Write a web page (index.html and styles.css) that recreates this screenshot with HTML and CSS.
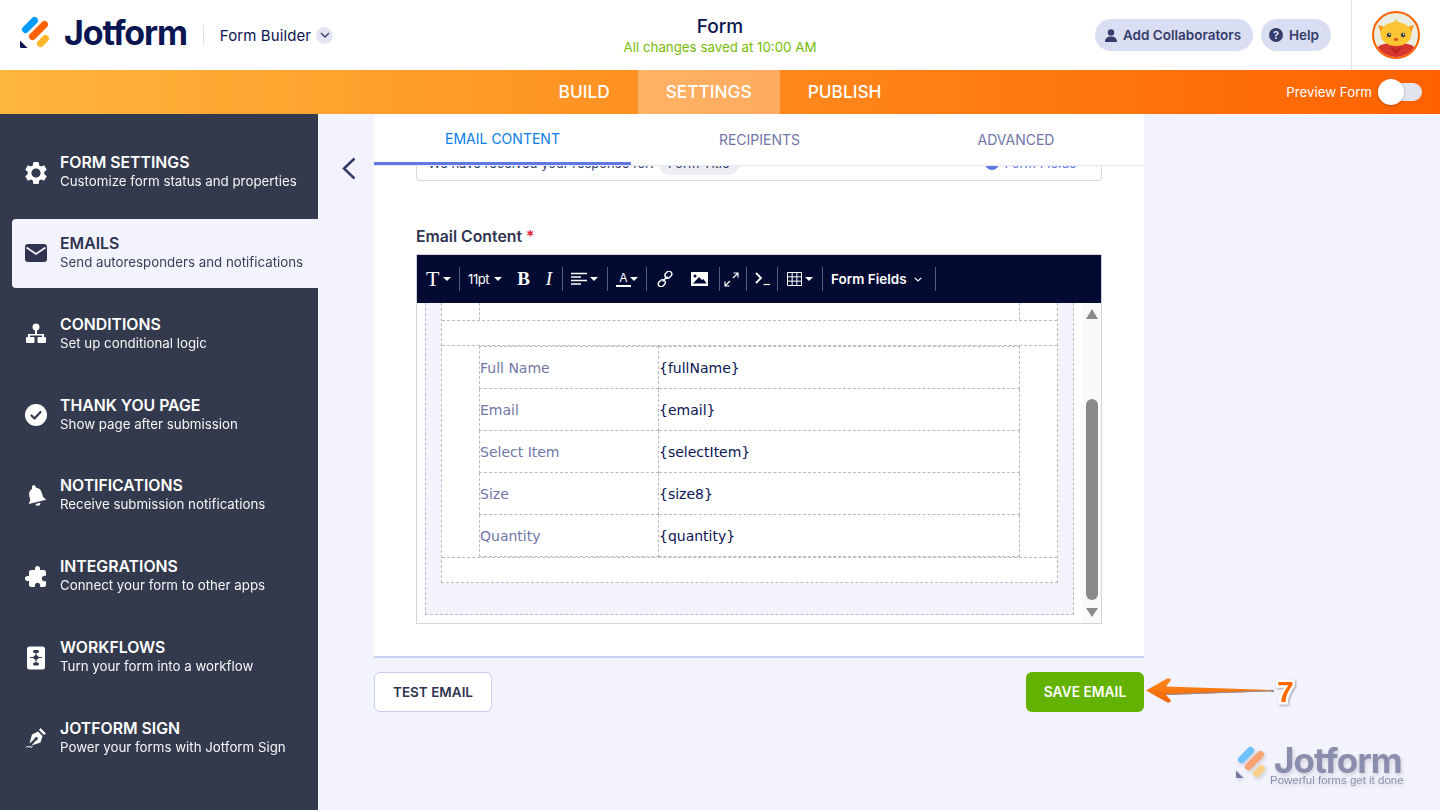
FILE: index.html
```html
<!DOCTYPE html>
<html lang="en">
<head>
<meta charset="utf-8">
<title>Form Builder</title>
<link rel="stylesheet" href="styles.css">
</head>
<body>
<header class="topbar">
  <div class="brand">
    <svg class="logo-mark" width="30" height="34" viewBox="0 0 30 34"><g fill="none" stroke-linecap="round" stroke-width="7"><path d="M5.500 13.500 14.500 4.500" stroke="#0099ff"/><path d="M12.500 20.500 24.500 8.500" stroke="#ff6100"/><path d="M20.500 27.500 25.500 22.500" stroke="#ffb629"/></g><path d="M0 24.500 7.500 32H1.500A1.500 1.500 0 0 1 0 30.500Z" fill="#0a1551"/></svg>
    <span class="wordmark">Jotform</span>
    <span class="brand-sep"></span>
    <span class="brand-sub">Form Builder</span>
    <span class="brand-drop"><svg width="10" height="6" viewBox="0 0 10 6"><path d="M1 1l4 4 4-4" fill="none" stroke="#343c6a" stroke-width="1.300"/></svg></span>
  </div>
  <div class="doc-title">
    <div class="doc-name">Form</div>
    <div class="doc-saved">All changes saved at 10:00 AM</div>
  </div>
  <div class="top-actions">
    <button class="pill pill-add"><svg width="12" height="13" viewBox="0 0 12 13"><circle cx="6" cy="3.500" r="3.200" fill="#343c6a"/><path d="M0 13c0-4 2.500-5.500 6-5.500s6 1.500 6 5.500z" fill="#343c6a"/></svg>Add Collaborators</button>
    <button class="pill pill-help"><span class="q-mark">?</span>Help</button>
    <span class="top-sep"></span>
    <svg class="avatar" width="48" height="48" viewBox="0 0 48 48">
      <circle cx="24" cy="24" r="23" fill="#e9ecdf" stroke="#ff6100" stroke-width="2"/>
      <clipPath id="av"><circle cx="24" cy="24" r="22"/></clipPath>
      <g clip-path="url(#av)">
        <path d="M5 50V38c0-4 8-6 19-6s19 2 19 6v12z" fill="#d8362c"/>
        <path d="M6 14l10 3-5 11z M42 14l-10 3 5 11z" fill="#f29a1f"/>
        <ellipse cx="24" cy="23" rx="15.500" ry="12" fill="#fcc531"/>
        <path d="M24 8l3 5h-6z" fill="#fcc531"/>
        <circle cx="17" cy="24" r="2.200" fill="#3a3a3a"/><circle cx="31" cy="24" r="2.200" fill="#3a3a3a"/>
        <circle cx="17.500" cy="23.200" r="0.800" fill="#fff"/><circle cx="31.500" cy="23.200" r="0.800" fill="#fff"/>
        <ellipse cx="24" cy="28.500" rx="2.400" ry="1.400" fill="#d9541e"/>
        <path d="M18 35l6 4 6-4v2l-6 6-6-6z" fill="#b92820"/>
      </g>
    </svg>
  </div>
</header>

<nav class="navbar">
  <div class="nav-tabs">
    <a class="nav-tab">BUILD</a>
    <a class="nav-tab is-active">SETTINGS</a>
    <a class="nav-tab">PUBLISH</a>
  </div>
  <div class="preview">
    <span>Preview Form</span>
    <span class="switch"><span class="knob"></span></span>
  </div>
</nav>

<div class="workspace">
  <aside class="sidebar">
    <div class="side-item">
      <svg class="side-icon" width="24" height="24" viewBox="1.500 1.500 21 21"><path fill="#fff" d="M19.140 12.940c.04-.3.06-.61.06-.94 0-.32-.02-.64-.07-.94l2.030-1.580c.18-.14.23-.41.12-.61l-1.920-3.320c-.12-.22-.37-.29-.59-.22l-2.390.96c-.5-.38-1.030-.7-1.620-.94L14.400 2.810c-.04-.24-.24-.41-.48-.41h-3.840c-.24 0-.43.17-.47.41L9.250 5.350c-.59.24-1.130.57-1.620.94l-2.390-.96c-.22-.08-.47 0-.59.22L2.740 8.870c-.12.21-.08.47.12.61l2.030 1.580c-.05.3-.09.63-.09.94s.02.64.07.94l-2.030 1.580c-.18.14-.23.41-.12.61l1.920 3.320c.12.22.37.29.59.22l2.390-.96c.5.38 1.030.7 1.620.94l.36 2.540c.05.24.24.41.48.41h3.840c.24 0 .44-.17.47-.41l.36-2.540c.59-.24 1.130-.56 1.620-.94l2.390.96c.22.08.47 0 .59-.22l1.920-3.320c.12-.22.07-.47-.12-.61l-2.010-1.580zM12 16c-2.200 0-4-1.800-4-4s1.800-4 4-4 4 1.800 4 4-1.800 4-4 4z"/></svg>
      <div class="side-text"><div class="side-title">FORM SETTINGS</div><div class="side-sub">Customize form status and properties</div></div>
    </div>
    <div class="side-item is-active">
      <svg class="side-icon" width="24" height="24" viewBox="0 0 24 24"><rect x="1" y="3" width="22" height="18" rx="3" fill="#2f3450"/><path d="M2.500 6.500 12 13l9.500-6.500" fill="none" stroke="#f3f3fe" stroke-width="1.800"/></svg>
      <div class="side-text"><div class="side-title">EMAILS</div><div class="side-sub">Send autoresponders and notifications</div></div>
    </div>
    <div class="side-item">
      <svg class="side-icon" width="24" height="24" viewBox="0 0 24 24"><circle cx="12" cy="5" r="3.500" fill="#fff"/><path d="M11 8h2v4h7v3h-2v-1.500H6V15H4v-3h7z" fill="#fff"/><rect x="2" y="15" width="8.500" height="6" rx="1" fill="#fff"/><rect x="13.500" y="15" width="8.500" height="6" rx="1" fill="#fff"/></svg>
      <div class="side-text"><div class="side-title">CONDITIONS</div><div class="side-sub">Set up conditional logic</div></div>
    </div>
    <div class="side-item">
      <svg class="side-icon" width="24" height="24" viewBox="0 0 24 24"><circle cx="12" cy="12" r="11" fill="#fff"/><path d="M7.500 12.500l3 3 6-6.500" fill="none" stroke="#343a4d" stroke-width="2.200" stroke-linecap="round" stroke-linejoin="round"/></svg>
      <div class="side-text"><div class="side-title">THANK YOU PAGE</div><div class="side-sub">Show page after submission</div></div>
    </div>
    <div class="side-item">
      <svg class="side-icon" width="24" height="24" viewBox="0 0 24 24"><g transform="rotate(-14 12 12)" fill="#fff"><path d="M12 1a2 2 0 0 1 2 2v1c3 1 4.500 3.500 4.500 6.500v4l2.500 3.500H3l2.500-3.500v-4C5.500 7.500 7 5 10 4V3a2 2 0 0 1 2-2z"/><path d="M9.500 19.500h5a2.500 2.500 0 0 1-5 0z"/></g></svg>
      <div class="side-text"><div class="side-title">NOTIFICATIONS</div><div class="side-sub">Receive submission notifications</div></div>
    </div>
    <div class="side-item">
      <svg class="side-icon" width="24" height="24" viewBox="0 0 24 24"><path transform="matrix(-1 0 0 1 24 0)" fill="#fff" d="M20.500 11H19V7c0-1.100-.9-2-2-2h-4V3.500C13 2.120 11.880 1 10.500 1S8 2.120 8 3.500V5H4c-1.100 0-1.990.9-1.990 2v3.800H3.500c1.490 0 2.700 1.210 2.700 2.700s-1.210 2.700-2.700 2.700H2V20c0 1.100.9 2 2 2h3.800v-1.500c0-1.490 1.210-2.700 2.700-2.700 1.490 0 2.700 1.210 2.700 2.700V22H17c1.100 0 2-.9 2-2v-4h1.500c1.380 0 2.500-1.120 2.500-2.500S21.880 11 20.500 11z"/></svg>
      <div class="side-text"><div class="side-title">INTEGRATIONS</div><div class="side-sub">Connect your form to other apps</div></div>
    </div>
    <div class="side-item">
      <svg class="side-icon" width="24" height="24" viewBox="0 0 24 24"><rect x="3" y="0.500" width="18" height="23" rx="2.500" fill="#fff"/><rect x="9" y="4" width="6" height="3" rx="1.500" fill="#343a4d"/><path d="M12 8.500l3.500 3-3.500 3-3.500-3z" fill="#343a4d"/><rect x="9" y="16.500" width="6" height="3" rx="1.500" fill="#343a4d"/><path d="M6 11.500h12M12 7v2M12 14v3" stroke="#343a4d" stroke-width="1"/></svg>
      <div class="side-text"><div class="side-title">WORKFLOWS</div><div class="side-sub">Turn your form into a workflow</div></div>
    </div>
    <div class="side-item">
      <svg class="side-icon" width="24" height="24" viewBox="0 0 24 24"><path d="M16.500 2l5.500 5.500-2 1.500-5-5z" fill="#fff"/><path d="M14 5.500l4.500 4.500-2 6.500-9 3 4.500-5a1.700 1.700 0 1 0-1.500-1.500l-5 4.500 2.500-9z" fill="#fff"/><path d="M2 21.500l1.500-1.500 1 1.500 1.500-1.500 1 1.500 1.500-1" fill="none" stroke="#fff" stroke-width="1"/></svg>
      <div class="side-text"><div class="side-title">JOTFORM SIGN</div><div class="side-sub">Power your forms with Jotform Sign</div></div>
    </div>
  </aside>

  <main class="stage">
    <div class="back-col">
      <svg width="14" height="23" viewBox="0 0 14 23"><path d="M12.500 1.500 2 11.500l10.500 10" fill="none" stroke="#343c6a" stroke-width="2.500"/></svg>
    </div>
    <div class="panel-col">
      <section class="card">
        <div class="tabs">
          <div class="tab is-active">EMAIL CONTENT</div>
          <div class="tab">RECIPIENTS</div>
          <div class="tab">ADVANCED</div>
        </div>
        <div class="card-body">
          <div class="subject">
            <div class="subject-row">
              <span>We have received your response for:</span>
              <span class="subject-pill">Form Title</span>
              <span class="subject-fields"><span class="dot"></span>Form Fields</span>
            </div>
          </div>
          <div class="field-label">Email Content <span class="req">*</span></div>
          <div class="editor">
            <div class="toolbar">
              <div class="tb-group"><span class="tb-item"><span class="g-t">T</span><i class="caret"></i></span></div>
              <div class="tb-group g2"><span class="tb-item"><span class="g-size">11pt</span><i class="caret"></i></span><span class="g-b">B</span><span class="g-i">I</span></div>
              <div class="tb-group g3"><span class="tb-item"><svg width="16" height="14" viewBox="0 0 16 14"><path d="M0 1.500h16M0 5h10M0 8.500h16M0 12h10" stroke="#fff" stroke-width="1.400"/></svg><i class="caret"></i></span></div>
              <div class="tb-group"><span class="tb-item"><span class="g-a">A</span><i class="caret caret-tight"></i></span></div>
              <div class="tb-group g5"><svg width="16" height="16" viewBox="0 0 16 16"><g fill="none" stroke="#fff" stroke-width="1.400"><rect x="7.500" y="1" width="7.500" height="5.500" rx="2.700" transform="rotate(-45 11.200 3.700)"/><rect x="1" y="9.500" width="7.500" height="5.500" rx="2.700" transform="rotate(-45 4.800 12.200)"/><path d="M5.500 10.500 10.500 5.500"/></g></svg><svg width="17" height="14" viewBox="0 0 17 14"><rect width="17" height="14" fill="#fff"/><circle cx="4" cy="4" r="1.500" fill="#030b33"/><path d="M2 11.500 8 5l3 3 1.500-1 3 4.500z" fill="#030b33"/></svg></div>
              <div class="tb-group g6"><svg width="15" height="15" viewBox="0 0 15 15"><path d="M9 6l5-5M9.500 1H14v4.500M6 9l-5 5M1 9.500V14h4.500" fill="none" stroke="#fff" stroke-width="1.200"/></svg></div>
              <div class="tb-group g7"><svg width="15" height="14" viewBox="0 0 15 14"><path d="M1 1l5 5-5 5" fill="none" stroke="#fff" stroke-width="1.800"/><path d="M8.500 12.500H15" stroke="#fff" stroke-width="1.200"/></svg></div>
              <div class="tb-group g8"><span class="tb-item"><svg width="15" height="14" viewBox="0 0 15 14"><path d="M.5.500h14v13H.5zM5.170.5v13M9.830.5v13M.5 4.830h14M.5 9.170h14" fill="none" stroke="#fff" stroke-width="1"/></svg><i class="caret"></i></span></div>
              <div class="tb-group g9"><span class="tb-item gap-8"><span class="g-fields">Form Fields</span><svg width="8" height="5" viewBox="0 0 8 5"><path d="M.8.800 4 4 7.200.8" fill="none" stroke="#fff" stroke-width="1.200"/></svg></span></div>
            </div>
            <div class="editor-body">
              <div class="doc">
                <div class="doc-inner">
                  <div class="stub"></div>
                  <div class="spacer"></div>
                  <table class="fields">
                    <tr><td class="lbl">Full Name</td><td>{fullName}</td></tr>
                    <tr><td class="lbl">Email</td><td>{email}</td></tr>
                    <tr><td class="lbl">Select Item</td><td>{selectItem}</td></tr>
                    <tr><td class="lbl">Size</td><td>{size8}</td></tr>
                    <tr><td class="lbl">Quantity</td><td>{quantity}</td></tr>
                  </table>
                  <div class="spacer spacer-end"></div>
                </div>
              </div>
              <div class="scrollbar">
                <i class="sb-up"></i>
                <i class="sb-thumb"></i>
                <i class="sb-down"></i>
              </div>
            </div>
          </div>
        </div>
      </section>
      <div class="actions">
        <button class="btn btn-test">TEST EMAIL</button>
        <button class="btn btn-save">SAVE EMAIL</button>
      </div>
    </div>

    <svg class="callout-arrow" width="130" height="30" viewBox="0 0 130 30">
      <defs><linearGradient id="ar" x1="0" y1="0" x2="0" y2="1"><stop offset="0" stop-color="#ff8a1e"/><stop offset="1" stop-color="#f06400"/></linearGradient></defs>
      <path d="M0 14.500 21 2.500q3-1 4 1.500l-5 6.500L128 14v1.200L20 19l5 5.500q-1 3-4 1.800z" fill="url(#ar)"/>
      <path d="M20 19l108-3.800v-1L20 18z" fill="#8a8fa8"/>
    </svg>
    <div class="callout-num">7</div>

    <div class="watermark">
      <svg width="32" height="34" viewBox="0 0 30 34"><g fill="none" stroke-linecap="round" stroke-width="7"><path d="M5.500 13.500 14.500 4.500" stroke="#0099ff"/><path d="M12.500 20.500 24.500 8.500" stroke="#ff6100"/><path d="M20.500 27.500 25.500 22.500" stroke="#ffb629"/></g><path d="M0 24.500 7.500 32H1.500A1.500 1.500 0 0 1 0 30.500Z" fill="#0a1551"/></svg>
      <div class="wm-text">
        <div class="wm-name">Jotform</div>
        <div class="wm-tag">Powerful forms get it done</div>
      </div>
    </div>
  </main>
</div>
</body>
</html>
```

FILE: styles.css
```css
* { box-sizing: border-box; }
html, body { margin: 0; height: 810px; overflow: hidden; }
body { font-family: Inter, "Noto Sans", sans-serif; color: #0a1551; background: #f3f3fe; }
button { font-family: inherit; border: 0; cursor: pointer; }

/* top bar */
.topbar { height: 70px; background: #fff; display: grid; grid-template-columns: 1fr auto 1fr; align-items: center; }
.brand { display: flex; align-items: center; padding-left: 20px; }
.logo-mark { flex: none; margin-top: -5px; }
.wordmark { font-size: 34px; font-weight: 700; letter-spacing: -1.150px; color: #0a1551; margin-left: 14px; line-height: 40px; margin-top: -4px; }
.brand-sep { width: 1px; height: 20px; background: #dfe0ea; margin: 0 16px; }
.brand-sub { font-size: 15px; color: #0a1551; letter-spacing: .1px; }
.brand-drop { width: 17px; height: 17px; border-radius: 50%; background: #e3e5f5; margin-left: 5px; display: flex; align-items: center; justify-content: center; }
.doc-title { text-align: center; }
.doc-name { font-size: 19px; font-weight: 500; line-height: 24px; color: #0a1551; }
.doc-saved { font-size: 13.300px; line-height: 16px; color: #78bb07; }
.top-actions { display: flex; align-items: center; justify-content: flex-end; height: 70px; padding-right: 20px; }
.pill { height: 32px; border-radius: 16px; background: #dadef3; color: #343c6a; font-size: 13.500px; font-weight: 600; padding: 0 0 0 10px; margin-left: 8px; display: flex; align-items: center; gap: 6px; white-space: nowrap; }
.pill-add { width: 158px; }
.pill-help { width: 70px; padding-left: 8px; }
.q-mark { width: 14px; height: 14px; border-radius: 50%; background: #343c6a; color: #dadef3; font-size: 11px; font-weight: 700; line-height: 14px; text-align: center; }
.top-sep { width: 1px; height: 70px; background: #dfe0e6; margin: 0 20px; }
.avatar { flex: none; }

/* orange nav */
.navbar { height: 44px; position: relative; display: flex; justify-content: center; background: linear-gradient(90deg, #ffb63c 0%, #ff6100 100%); }
.nav-tabs { display: flex; }
.nav-tab { height: 44px; padding: 0 28px; color: #fff; font-size: 17.300px; font-weight: 500; line-height: 44px; }
.nav-tab.is-active { background: rgba(255, 255, 255, .3); }
.preview { position: absolute; right: 18px; top: 0; height: 44px; display: flex; align-items: center; gap: 6px; color: #fff; font-size: 13.300px; }
.switch { width: 44px; height: 18px; border-radius: 9px; background: #e1e3ec; position: relative; display: block; }
.knob { position: absolute; left: 0; top: -4px; width: 26px; height: 26px; border-radius: 50%; background: #fff; box-shadow: 0 1px 3px rgba(0,0,0,.25); }

/* layout */
.workspace { display: flex; height: 696px; }
.sidebar { width: 318px; flex: none; background: #343a4d; padding: 24px 0 0 12px; display: flex; flex-direction: column; gap: 11.850px; }
.side-item { height: 69px; display: flex; align-items: center; gap: 12px; padding-left: 12px; color: #fff; border-radius: 4px 0 0 4px; }
.side-item.is-active { background: #f3f3fe; color: #2f3450; }
.side-icon { flex: none; }
.side-text { padding-bottom: 2px; }
.side-title { font-size: 15.800px; font-weight: 600; line-height: 20px; white-space: nowrap; }
.side-sub { font-size: 13.300px; line-height: 17px; opacity: .95; white-space: nowrap; }

.stage { flex: 1; position: relative; display: flex; overflow: hidden; }
.back-col { width: 56px; flex: none; padding: 43px 0 0 24px; }
.panel-col { width: 770px; flex: none; }
.card { background: #fff; border-bottom: 2px solid #c8ceed; }
.tabs { display: grid; grid-template-columns: 257px 257px 256px; height: 52px; border-bottom: 1px solid #e8e9f5; background: #fff; position: relative; }
.tab { text-align: center; font-size: 14px; line-height: 51px; color: #6f76a7; height: 51px; }
.tab.is-active { color: #0a7ee8; line-height: 50px; border-bottom: 3px solid #5f78e6; }
.card-body { padding: 0 42px 32px; }

.subject { height: 15px; overflow: hidden; border: 1px solid #d8dae9; border-top: 0; border-radius: 0 0 4px 4px; }
.subject-row { display: flex; align-items: center; height: 30px; margin-top: -18px; padding: 0 11px; font-size: 13px; color: #343c6a; }
.subject-pill { margin-left: 4px; width: 82px; height: 24px; border-radius: 12px; background: #eceef4; text-align: center; line-height: 24px; }
.subject-fields { margin-left: auto; display: flex; align-items: center; gap: 6px; color: #5f78e6; padding-right: 14px; }
.dot { width: 14px; height: 14px; border-radius: 50%; background: #5f78e6; }
.field-label { margin-top: 46px; font-size: 15.800px; font-weight: 600; line-height: 20px; color: #2f3450; margin-bottom: 7px; }
.req { color: #e3243b; }

.editor { border: 1px solid #d3d3de; height: 370px; }
.toolbar { height: 48px; background: #030b33; display: flex; align-items: center; color: #fff; }
.tb-group { height: 24px; padding: 0 8px; border-right: 1px solid #545a78; display: flex; align-items: center; flex: none; }
.tb-item { display: flex; align-items: center; gap: 3px; }
.gap-8 { gap: 8px; }
.g2 { gap: 15px; padding-right: 9px; }
.g3 { padding-right: 9px; }
.g5 { gap: 18px; padding: 0 11px 0 10px; }
.g6 { padding: 0 7px 0 4px; }
.g7 { padding: 0 7px 0 8px; }
.g8 { padding: 0 9px 0 9px; }
.g9 { padding: 0 13px 0 8px; }
.tb-group:first-child { padding-left: 9px; }
.caret { width: 0; height: 0; border-left: 4px solid transparent; border-right: 4px solid transparent; border-top: 4px solid #fff; }
.caret-tight { margin-left: -4px; }
.g-t { font: 22px/24px "Liberation Serif", serif; width: 14px; }
.g-size { font-size: 13px; letter-spacing: -.4px; width: 23px; }
.g-b { font: 700 19px/24px "Liberation Serif", serif; width: 13px; text-align: center; }
.g-i { font: italic 19px/24px "Liberation Serif", serif; width: 8px; text-align: center; }
.g-a { font-size: 12px; line-height: 14px; width: 15px; text-align: center; border-bottom: 2px solid #fff; }
.g-fields { font-size: 13.500px; font-weight: 600; white-space: nowrap; width: 75px; }

.editor-body { height: 320px; display: flex; justify-content: space-between; overflow: hidden; }
.doc { width: 649px; margin-left: 8px; height: 312px; background: #f3f3fe; border: 1px dashed #bbb; border-top: 0; padding: 0 15px 31px; }
.doc-inner { background: #fff; border: 1px dashed #bbb; border-top: 0; height: 280px; }
.stub { height: 17px; margin: 0 37px; border: 1px dashed #bbb; border-top: 0; border-bottom: 0; }
.spacer { height: 26px; border-top: 1px dashed #bbb; border-bottom: 1px dashed #bbb; }
.spacer-end { border-bottom: 0; height: 25px; }
.fields { width: 541px; margin: 0 37px; border-collapse: collapse; table-layout: fixed; font: 14px/20px "DejaVu Sans", Verdana, sans-serif; color: #0a1551; }
.fields td { height: 42px; padding: 0; border: 1px dashed #bbb; white-space: nowrap; }
.fields td.lbl { width: 179px; color: #6f76a7; }
.scrollbar { width: 19px; background: #fafafa; display: flex; flex-direction: column; align-items: center; padding-top: 6px; }
.sb-up { width: 0; height: 0; border-left: 6px solid transparent; border-right: 6px solid transparent; border-bottom: 10px solid #8a8a8a; }
.sb-thumb { width: 12px; height: 201px; border-radius: 6px; background: #8a8a8a; margin-top: 80px; }
.sb-down { width: 0; height: 0; border-left: 6px solid transparent; border-right: 6px solid transparent; border-top: 9px solid #8a8a8a; margin-top: 8px; }

.actions { display: flex; justify-content: space-between; margin-top: 14px; }
.btn { width: 118px; height: 40px; border-radius: 6px; font-size: 13.800px; font-weight: 600; padding: 0; }
.btn-test { background: #fff; border: 1px solid #c8ceed; color: #2f3450; font-size: 13.500px; }
.btn-save { background: #64b200; color: #fff; }

/* overlays */
.callout-arrow { position: absolute; left: 828px; top: 562px; }
.callout-num { position: absolute; left: 959px; top: 561px; font: 700 30px/34px "Liberation Sans", sans-serif; color: #ff6a00; -webkit-text-stroke: 5px #fff; paint-order: stroke fill; filter: drop-shadow(1px 1px 1px rgba(0,0,0,.35)); }
.watermark { position: absolute; left: 917px; top: 632px; display: flex; gap: 3px; opacity: .55; filter: drop-shadow(1px 2px 2px rgba(0,0,0,.3)); }
.wm-name { font-size: 35px; font-weight: 700; line-height: 28px; letter-spacing: -1px; color: #343c6a; padding-left: 4px; }
.wm-tag { font: 11.500px/12px "Liberation Sans", sans-serif; color: #343c6a; }
```
